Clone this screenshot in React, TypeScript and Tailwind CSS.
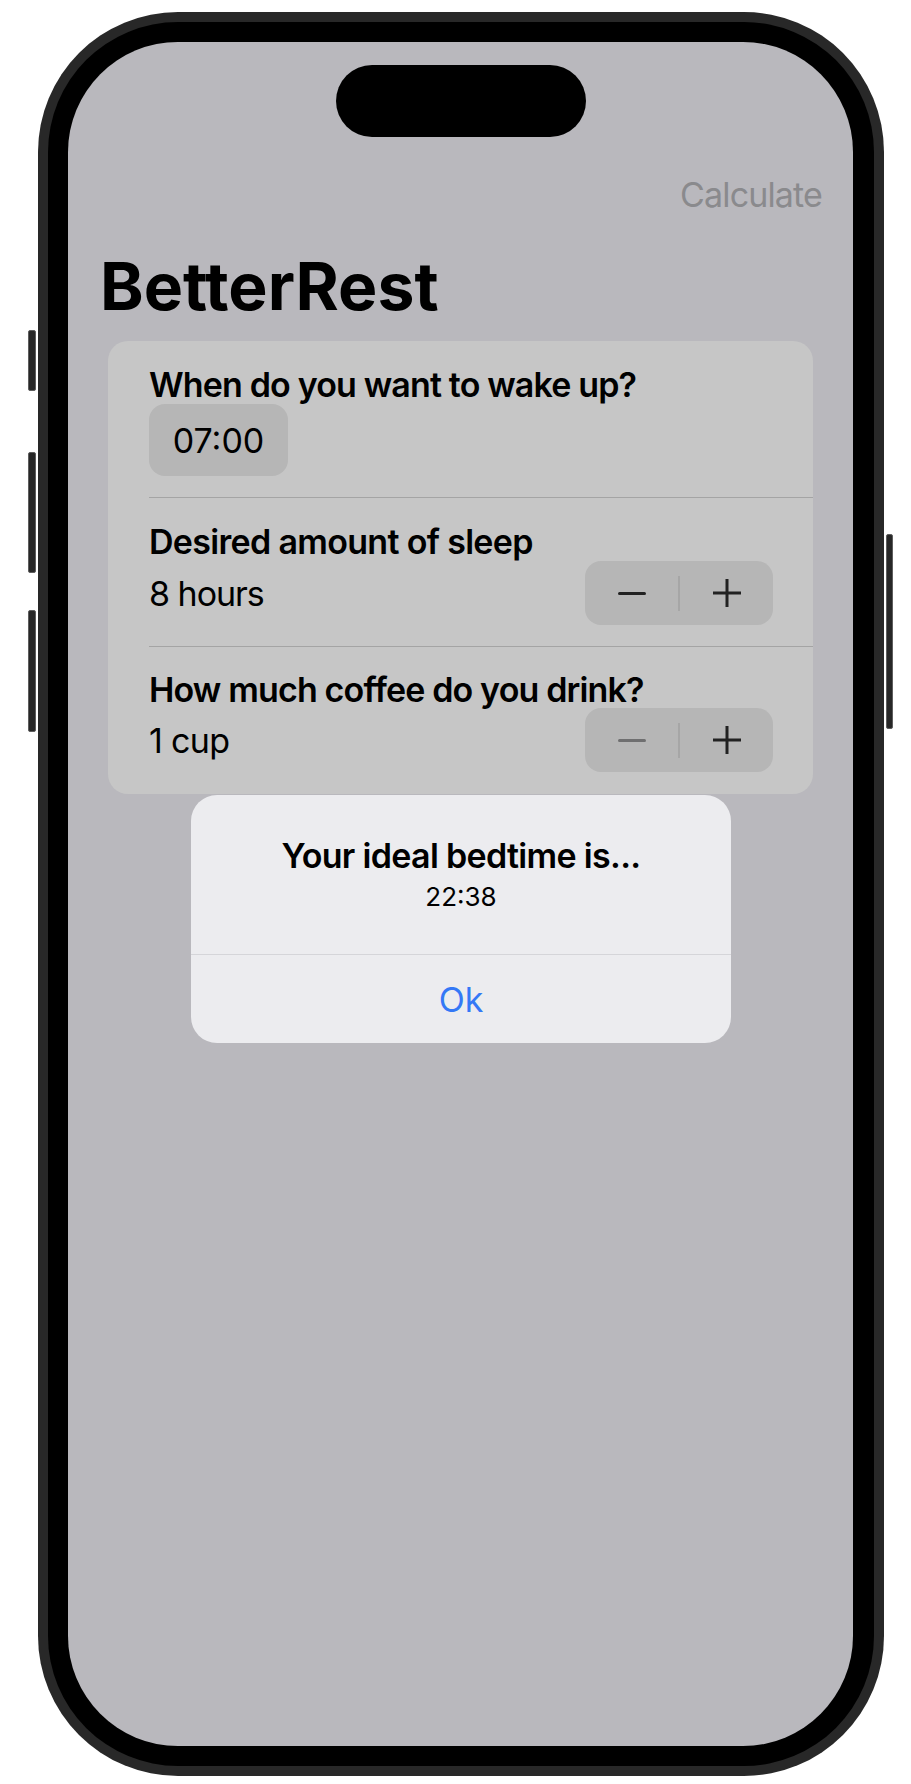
import React from "react";

const font = { fontFamily: "Inter, 'Noto Sans', 'Liberation Sans', sans-serif" };

function Minus({ disabled }: { disabled?: boolean }) {
  return (
    <div
      className={`w-[28px] h-[3px] rounded-full ${disabled ? "bg-[#6f6f70]" : "bg-[#222222]"}`}
    />
  );
}

function Plus() {
  return (
    <svg width="28" height="28" viewBox="0 0 28 28">
      <line x1="0.5" y1="14" x2="27.5" y2="14" stroke="#222222" strokeWidth="3" strokeLinecap="round" />
      <line x1="14" y1="0.5" x2="14" y2="27.5" stroke="#222222" strokeWidth="3" strokeLinecap="round" />
    </svg>
  );
}

function Stepper({ minusDisabled }: { minusDisabled?: boolean }) {
  return (
    <div className="w-[188px] h-[64px] rounded-[16px] bg-[#b6b6b6] flex items-center">
      <div className="w-[93px] h-full flex items-center justify-center">
        <Minus disabled={minusDisabled} />
      </div>
      <div className="w-[2px] h-[35px] bg-[#a6a6a6]" />
      <div className="w-[93px] h-full flex items-center justify-center">
        <Plus />
      </div>
    </div>
  );
}

function SideButton({ className }: { className: string }) {
  return <div className={`w-full rounded-[2px] bg-[#272727] border border-[#5e5e5e] ${className}`} />;
}

export default function App() {
  return (
    <div className="w-[911px] h-[1784px] bg-white flex pl-[28px] pt-[12px]" style={font}>
      <div className="w-[8px] flex flex-col">
        <SideButton className="mt-[318px] h-[61px]" />
        <SideButton className="mt-[61px] h-[121px]" />
        <SideButton className="mt-[37px] h-[122px]" />
      </div>

      <div className="ml-[2px] w-[846px] h-[1764px] rounded-[140px] bg-[#282828] p-[10px]">
        <div className="w-full h-full rounded-[130px] bg-black pt-[20px] pb-[20px] pl-[20px] pr-[21px]">
          <div className="relative w-full h-full rounded-[110px] bg-[#b9b8bd] overflow-hidden flex flex-col">
            <div className="mx-auto mt-[23px] w-[250px] h-[72px] rounded-full bg-black shrink-0" />

            <div className="self-end mr-[31px] mt-[37px] text-[34px] leading-[41px] text-[#8a8a8d] tracking-[-0.025em]">
              Calculate
            </div>

            <div className="ml-[32px] mt-[31px] text-[66px] leading-[80px] font-bold text-black">
              BetterRest
            </div>

            <div className="mx-[40px] mt-[15px] rounded-[20px] bg-[#c6c6c6] flex flex-col">
              <div className="pl-[41px] pr-[40px] pt-[23px] pb-[21px] flex flex-col items-start">
                <div className="text-[34px] leading-[41px] font-semibold text-black tracking-[-0.025em]">
                  When do you want to wake up?
                </div>
                <div className="-mt-[1px] w-[139px] h-[72px] rounded-[16px] bg-[#b6b6b6] flex items-center justify-center text-[34px] leading-[41px] text-black">
                  07:00
                </div>
              </div>
              <div className="ml-[41px] h-px bg-[#a4a4a4]" />

              <div className="pl-[41px] pr-[40px] pt-[23px] pb-[21px] flex flex-col">
                <div className="text-[34px] leading-[41px] font-semibold text-black tracking-[-0.02em]">
                  Desired amount of sleep
                </div>
                <div className="-mt-[1px] h-[64px] flex items-center justify-between">
                  <span className="text-[34px] leading-[41px] text-black tracking-[-0.03em]">8 hours</span>
                  <Stepper />
                </div>
              </div>
              <div className="ml-[41px] h-px bg-[#a4a4a4]" />

              <div className="pl-[41px] pr-[40px] pt-[22px] pb-[22px] flex flex-col">
                <div className="text-[34px] leading-[41px] font-semibold text-black tracking-[-0.025em]">
                  How much coffee do you drink?
                </div>
                <div className="-mt-[2px] h-[64px] flex items-center justify-between">
                  <span className="text-[34px] leading-[41px] text-black tracking-[-0.02em]">1 cup</span>
                  <Stepper minusDisabled />
                </div>
              </div>
            </div>

            <div className="absolute left-[123px] top-[753px] w-[540px] rounded-[26px] bg-[#ececef] flex flex-col">
              <div className="pt-[40px] pb-[41px] flex flex-col items-center">
                <div className="text-[34px] leading-[41px] font-semibold text-black tracking-[-0.02em]">
                  Your ideal bedtime is...
                </div>
                <div className="mt-[5px] text-[26px] leading-[32px] text-black">22:38</div>
              </div>
              <div className="h-px bg-[#d5d5d9]" />
              <div className="h-[88px] flex items-center justify-center text-[34px] leading-[41px] text-[#3478f6]">
                Ok
              </div>
            </div>
          </div>
        </div>
      </div>

      <div className="ml-[2px] w-[7px] flex flex-col">
        <SideButton className="mt-[522px] h-[195px]" />
      </div>
    </div>
  );
}
